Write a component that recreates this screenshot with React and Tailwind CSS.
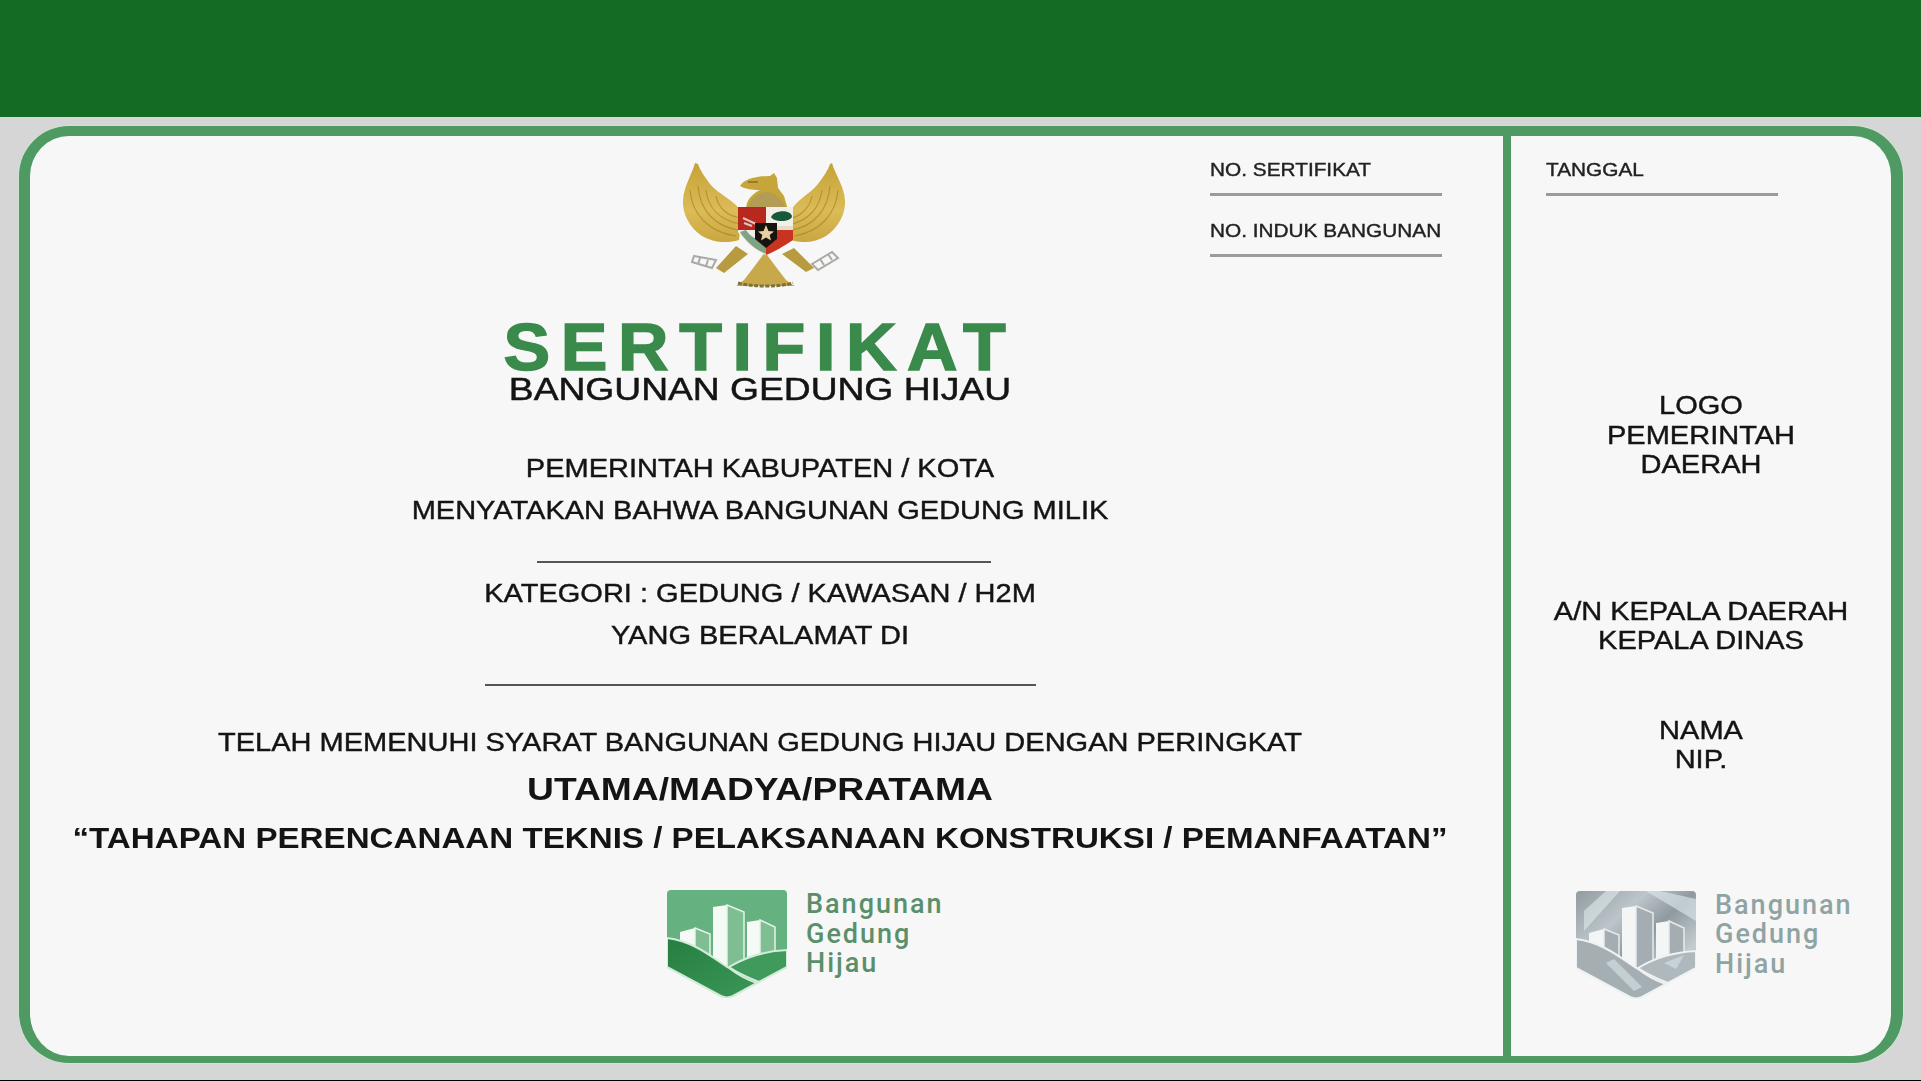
import React from "react";

const font = "font-['Liberation_Sans',Arial,sans-serif]";

// coordinates follow the reference crop, hence the offset viewBox
const Garuda = () => (
  <svg viewBox="40 20 168 130" className="w-[168px] h-[130px] block blur-[0.5px]">
    <defs>
      <linearGradient id="gold" x1="0" y1="0" x2="0" y2="1">
        <stop offset="0" stopColor="#c6a236" />
        <stop offset="0.6" stopColor="#dcbc58" />
        <stop offset="1" stopColor="#c9a640" />
      </linearGradient>
    </defs>
    {/* banner and chains */}
    <path d="M54 116 L76 120 L72 128 L52 122 Z M60 118 L58 124 M68 120 L66 126" fill="none" stroke="#a9a9a6" strokeWidth="2" />
    <path d="M172 124 L192 112 L198 118 L178 130 Z M180 119 L184 125 M188 114 L192 120" fill="none" stroke="#a9a9a6" strokeWidth="2" />
    {/* wings */}
    <path d="M55 23 C52 34 44 46 43 60 C42 74 50 88 62 96 C72 102 86 104 99 100 L102 72 C94 60 78 54 70 44 C64 36 60 30 58 24 Z" fill="url(#gold)" />
    <path d="M192 23 C195 34 204 46 205 60 C206 74 198 88 186 96 C176 102 164 104 151 100 L150 72 C156 60 170 54 178 44 C184 36 188 30 190 24 Z" fill="url(#gold)" />
    <path d="M50 50 C52 74 68 92 96 96 M58 46 C60 70 74 86 98 90 M66 50 C68 68 80 80 100 84 M76 56 C78 68 88 76 100 78" fill="none" stroke="#a5841f" strokeWidth="1.2" opacity="0.65" />
    <path d="M198 50 C196 74 180 92 154 96 M190 46 C188 70 174 86 152 90 M182 50 C180 68 168 80 152 84 M172 56 C170 68 160 76 152 78" fill="none" stroke="#a5841f" strokeWidth="1.2" opacity="0.65" />
    {/* head and body */}
    <path d="M100 46 C104 39 116 36 130 36 L134 33 L137 38 L138 48 L144 56 L148 70 L106 70 C106 60 112 54 120 50 C112 50 105 49 100 46 Z" fill="#c6a53a" />
    <path d="M108 68 C110 58 120 52 126 52 C132 52 140 56 146 68 Z" fill="#b39c55" />
    <path d="M108 42 H118" stroke="#86702a" strokeWidth="1.5" />
    {/* legs and tail */}
    <path d="M96 106 L76 128 L84 133 L108 114 Z M154 108 L174 128 L166 132 L142 114 Z" fill="#b89a40" />
    <path d="M125 112 C118 122 110 132 104 140 C100 143 98 145 96 146 L155 146 C152 145 150 143 146 140 C140 132 132 122 125 112 Z" fill="#c7a94c" />
    <path d="M98 143 C112 147 140 147 153 143" fill="none" stroke="#7f7038" strokeWidth="3" strokeDasharray="4 1.5" />
    {/* shield */}
    <path d="M98 67 H153 V100 C144 106 134 112 126 115 C116 111 106 104 98 92 Z" fill="#f1efe6" />
    <path d="M98 67 H126 V90 H98 Z" fill="#b8281f" />
    <path d="M103 78 L116 84 M104 83 L112 86" stroke="#d8c9c0" strokeWidth="2" />
    <path d="M126 90 H153 V100 C144 106 134 112 126 115 Z" fill="#c93420" />
    <path d="M100 92 C106 102 116 110 126 114 V102 C116 100 110 96 106 90 Z" fill="#7fa384" />
    <path d="M131 77 C134 70 150 69 152 76 C152 82 134 83 131 77 Z" fill="#15593a" />
    <path d="M126 86 H153 V90 H126 Z" fill="#e6dccb" />
    <path d="M115 83 H137 V99 L126 108 L115 99 Z" fill="#17130f" />
    <path d="M126 85 L128.4 91 L134 91.4 L129.7 95 L131 100.6 L126 97.6 L121 100.6 L122.3 95 L118 91.4 L123.6 91 Z" fill="#e8cfa0" />
  </svg>
);

const Logo = ({ silver }) => {
  const front = silver ? "#f4f6f6" : "#f5faf6";
  const side = silver ? "#a3adb2" : "#7fbd93";
  const edge = silver ? "#e6ecee" : "#e4f3e8";
  const hillLine = silver ? "#eef2f3" : "#d3ecd9";
  return (
    <div className="flex items-start gap-[19px]">
      <svg viewBox="0 0 120 108" className="w-[120px] h-[108px] block blur-[0.4px]">
        <defs>
          <linearGradient id="silverA" x1="0" y1="0" x2="1" y2="1">
            <stop offset="0" stopColor="#929ba0" />
            <stop offset="0.3" stopColor="#bcc6ca" />
            <stop offset="0.5" stopColor="#8f999f" />
            <stop offset="0.75" stopColor="#c4ced2" />
            <stop offset="1" stopColor="#8f9aa0" />
          </linearGradient>
          <linearGradient id="greenDark" x1="0" y1="0" x2="1" y2="1">
            <stop offset="0" stopColor="#267f41" />
            <stop offset="1" stopColor="#3b9657" />
          </linearGradient>
        </defs>
        <path d="M4 0 H116 Q120 0 120 4 V77 L66 106 Q60 109 54 106 L0 77 V4 Q0 0 4 0 Z" fill={silver ? "url(#silverA)" : "#66b180"} />
        {silver && <path d="M70 0 L120 30 V8 L84 0 Z M8 20 L30 0 L44 0 L8 40 Z" fill="#dce6ea" opacity="0.65" />}
        {/* buildings */}
        <path d="M46 84 V17 L60 15 V84 Z" fill={front} />
        <path d="M60 15 L77 22 V80 L60 84 Z" fill={side} stroke={edge} strokeWidth="1.5" />
        <path d="M80 76 V32 L93 30 V72 Z" fill={front} />
        <path d="M93 30 L108 37 V70 L93 72 Z" fill={side} stroke={edge} strokeWidth="1.5" />
        <path d="M13 60 V42 L28 38 V70 Z" fill={front} />
        <path d="M28 38 L43 44 V76 L28 70 Z" fill={side} stroke={edge} strokeWidth="1.5" />
        {/* hills */}
        <path d="M62 77 C80 66 100 61 120 60 V77 L92 92 C82 88 72 84 62 77 Z" fill={silver ? "#aeb8bd" : "#3f9a5c"} stroke={hillLine} strokeWidth="2" />
        <path d="M0 48 C30 52 48 70 62 78 C70 84 80 90 90 93 L66 106 Q60 109 54 106 L0 77 Z" fill={silver ? "#a4aeb3" : "url(#greenDark)"} stroke={hillLine} strokeWidth="2" />
        {silver && <path d="M30 72 L58 100 L66 96 L38 68 Z M88 72 L108 64 L100 78 Z" fill="#d2dde1" opacity="0.7" />}
      </svg>
      <div className={`font-['Roboto',Arial,sans-serif] font-medium text-[27px] leading-[29.5px] tracking-[2px] ${silver ? "text-[#8fa3a3]" : "text-[#5a8f6c]"}`}>
        <div>Bangunan</div>
        <div>Gedung</div>
        <div>Hijau</div>
      </div>
    </div>
  );
};

const Field = ({ label }) => (
  <div className="h-[60px]">
    <div className="mt-[1px] h-[34px] leading-[34px] text-[19px] text-[#222] whitespace-nowrap origin-left scale-x-[1.095] [-webkit-text-stroke:0.4px_#222]">{label}</div>
    <div className="mt-[6px] h-[3px] w-[232px] bg-[#9b9b9b]"></div>
  </div>
);

const Line = ({ children, cls }) => (
  <div className={`text-center whitespace-nowrap ${cls}`}>{children}</div>
);

const body = "h-[42px] leading-[42px] text-[25px] text-[#141414] scale-x-[1.16] [-webkit-text-stroke:0.4px_#141414]";

export default function App() {
  return (
    <div className={`h-[1081px] w-full flex flex-col overflow-hidden bg-[#d6d6d6] border-b border-black ${font}`}>
      <div className="h-[117px] shrink-0 bg-[#146c24]"></div>

      <div className="flex-1 pt-[9px] pb-[17px] pl-[19px] pr-[18px] flex">
        <div className="flex-1 flex bg-[#f7f7f7] border-[#4f9a63] border-t-[10px] border-b-[7px] border-l-[11px] border-r-[12px] rounded-[50px] overflow-hidden shadow-[0_0_0_1px_#cfe3d3]">
          {/* left part */}
          <div className="w-[1473px] shrink-0 border-r-[8px] border-[#4f9a63] box-content overflow-hidden">
            <div className="flex pl-[650px] pt-[24px]">
              <Garuda />
              <div className="ml-[362px] w-[232px] -mt-[8px]">
                <Field label="NO. SERTIFIKAT" />
                <Field label="NO. INDUK BANGUNAN" />
              </div>
            </div>

            <div className="pr-[13px]">
              <Line cls="mt-[27px] h-[60px] leading-[60px] font-bold text-[66px] tracking-[10px] text-[#3a8a4c] scale-x-[1.06] [-webkit-text-stroke:1.5px_#3a8a4c]">SERTIFIKAT</Line>
              <Line cls="h-[26px] leading-[26px] text-[31px] text-[#141414] scale-x-[1.2] [-webkit-text-stroke:0.5px_#141414]">BANGUNAN GEDUNG HIJAU</Line>
              <Line cls={`mt-[44px] ${body}`}>PEMERINTAH KABUPATEN / KOTA</Line>
              <Line cls={body}>MENYATAKAN BAHWA BANGUNAN GEDUNG MILIK</Line>
              <div className="mt-[30px] ml-[507px] h-[2px] w-[454px] bg-[#555]"></div>
              <Line cls={`mt-[9px] ${body}`}>KATEGORI : GEDUNG / KAWASAN / H2M</Line>
              <Line cls={body}>YANG BERALAMAT DI</Line>
              <div className="mt-[28px] mx-auto h-[2px] w-[551px] bg-[#555]"></div>
              <Line cls={`mt-[35px] ${body}`}>TELAH MEMENUHI SYARAT BANGUNAN GEDUNG HIJAU DENGAN PERINGKAT</Line>
              <Line cls="mt-[5px] h-[42px] leading-[42px] text-[32px] font-bold text-[#141414] scale-x-[1.163]">UTAMA/MADYA/PRATAMA</Line>
              <Line cls="mt-[7px] h-[42px] leading-[42px] text-[29px] font-bold text-[#141414] scale-x-[1.143]">“TAHAPAN PERENCANAAN TEKNIS / PELAKSANAAN KONSTRUKSI / PEMANFAATAN”</Line>
            </div>
            <div className="mt-[31px] pl-[637px]">
              <Logo />
            </div>
          </div>

          {/* right part */}
          <div className="flex-1 pl-[35px]">
            <div className="pt-[16px]">
              <Field label="TANGGAL" />
            </div>
            <div className="-ml-[35px] text-center text-[25px] leading-[29.5px] text-[#141414] [-webkit-text-stroke:0.4px_#141414]">
              <div className="mt-[178px] scale-x-[1.16]">LOGO<br />PEMERINTAH<br />DAERAH</div>
              <div className="mt-[117px] scale-x-[1.16]">A/N KEPALA DAERAH<br />KEPALA DINAS</div>
              <div className="mt-[60px] scale-x-[1.16]">NAMA<br />NIP.</div>
            </div>
            <div className="mt-[116px] ml-[30px]">
              <Logo silver />
            </div>
          </div>
        </div>
      </div>
    </div>
  );
}
